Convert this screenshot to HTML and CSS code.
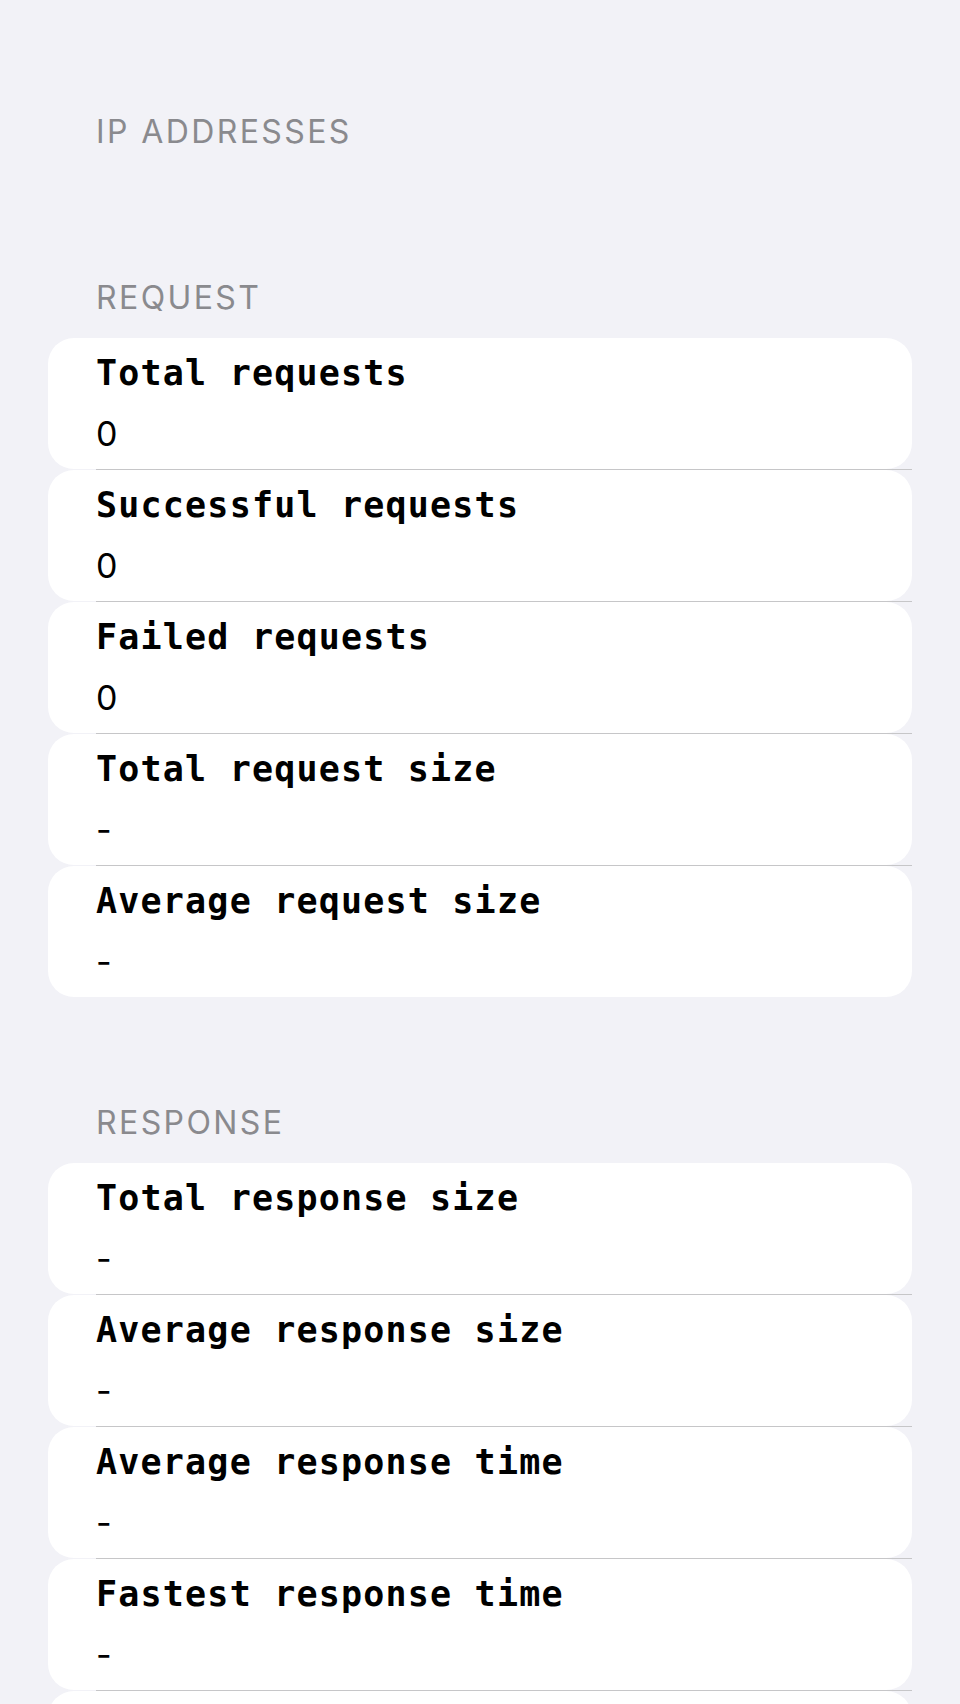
FILE: index.html
```html
<!DOCTYPE html>
<html lang="en">
<head>
<meta charset="utf-8">
<title>Statistics</title>
<link rel="stylesheet" href="styles.css">
</head>
<body>
<main class="page">
  <section class="section">
    <h2 class="section-header">IP ADDRESSES</h2>
    <div class="list"></div>
  </section>

  <section class="section">
    <h2 class="section-header">REQUEST</h2>
    <div class="list">
      <div class="row"><div class="row-title">Total requests</div><div class="row-value">0</div></div>
      <div class="sep"></div>
      <div class="row"><div class="row-title">Successful requests</div><div class="row-value">0</div></div>
      <div class="sep"></div>
      <div class="row"><div class="row-title">Failed requests</div><div class="row-value">0</div></div>
      <div class="sep"></div>
      <div class="row"><div class="row-title">Total request size</div><div class="row-value">-</div></div>
      <div class="sep"></div>
      <div class="row"><div class="row-title">Average request size</div><div class="row-value">-</div></div>
    </div>
  </section>

  <section class="section">
    <h2 class="section-header">RESPONSE</h2>
    <div class="list">
      <div class="row"><div class="row-title">Total response size</div><div class="row-value">-</div></div>
      <div class="sep"></div>
      <div class="row"><div class="row-title">Average response size</div><div class="row-value">-</div></div>
      <div class="sep"></div>
      <div class="row"><div class="row-title">Average response time</div><div class="row-value">-</div></div>
      <div class="sep"></div>
      <div class="row"><div class="row-title">Fastest response time</div><div class="row-value">-</div></div>
      <div class="sep"></div>
      <div class="row"></div>
    </div>
  </section>
</main>
</body>
</html>
```
FILE: styles.css
```css
html, body {
  margin: 0;
  padding: 0;
  height: 1704px;
  overflow: hidden;
  background: #f2f2f7;
}

.page {
  padding-top: 112px;
  display: flex;
  flex-direction: column;
  gap: 106px;
}

.section {
  display: flex;
  flex-direction: column;
  gap: 20px;
}

.section-header {
  margin: 0;
  padding: 0 96px;
  height: 40px;
  line-height: 40px;
  font-family: Inter, "Liberation Sans", sans-serif;
  font-weight: 400;
  font-size: 32px;
  letter-spacing: 2.4px;
  color: #8a8a8e;
}

.list {
  margin: 0 48px;
  display: flex;
  flex-direction: column;
}

.row {
  box-sizing: border-box;
  height: 131px;
  padding: 13px 48px 0;
  background: #ffffff;
  border-radius: 26px;
  display: flex;
  flex-direction: column;
}

.row-title {
  height: 44px;
  line-height: 44px;
  font-family: "DejaVu Sans Mono", "Liberation Mono", monospace;
  font-weight: 700;
  font-size: 35px;
  letter-spacing: 1.2px;
  color: #000000;
  white-space: nowrap;
}

.row-value {
  margin-top: 17px;
  height: 44px;
  line-height: 44px;
  font-family: Inter, "Liberation Sans", sans-serif;
  font-weight: 400;
  font-size: 34px;
  color: #000000;
}

.sep {
  height: 1px;
  margin-left: 48px;
  background: #c6c6c8;
}
```
